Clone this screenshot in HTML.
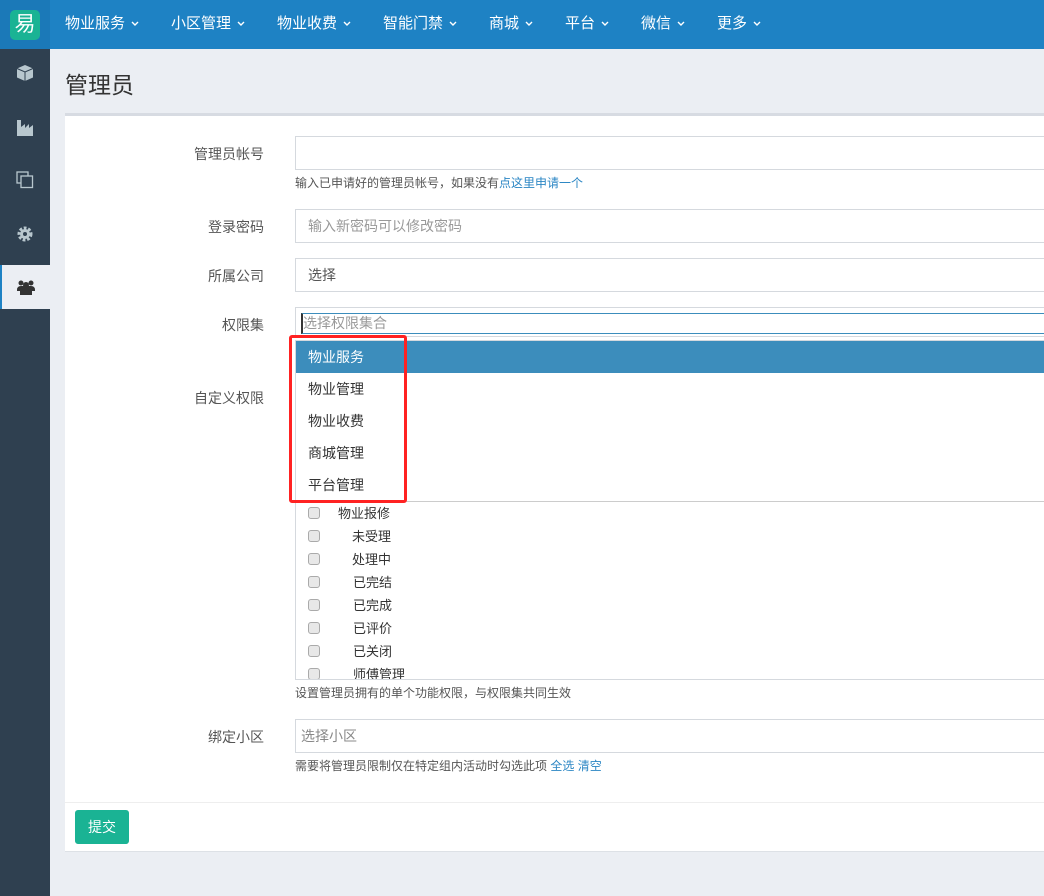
<!DOCTYPE html>
<html><head><meta charset="utf-8"><style>
*{box-sizing:border-box;margin:0;padding:0}
body{width:1044px;height:896px;overflow:hidden;background:#ebeef3;font-family:"Liberation Sans","Noto Sans CJK SC",sans-serif;font-size:14px;color:#333;position:relative}
.top{position:absolute;left:0;top:0;width:1044px;height:49px;background:#1e82c4}
.logo{position:absolute;left:0;top:0;width:50px;height:49px;background:#1b79b8}
.logo div{position:absolute;left:10px;top:10px;width:30px;height:30px;border-radius:5px;background:#1ab394;color:#fff;font-size:21px;line-height:30px;text-align:center}
.nav{position:absolute;top:0;height:49px;line-height:47px;color:#fff;font-size:15px}
.nav svg{margin-left:6px;vertical-align:middle}
.side{position:absolute;left:0;top:49px;width:50px;height:847px;background:#2f4050}
.si{position:absolute;left:0;width:50px;height:44px;display:flex;align-items:center;justify-content:center}
.act{background:#ebeef3;border-left:2px solid #1e82c4}
h1{position:absolute;left:65px;top:66px;font-size:23px;font-weight:normal;color:#333}
.card{position:absolute;left:65px;top:113px;width:990px;height:739px;background:#fff;border-top:3px solid #d7dbe2;border-bottom:1px solid #dde1e6}
.lbl{position:absolute;right:780px;font-size:14px;color:#555;text-align:right}
.inp{position:absolute;left:295px;width:760px;height:34px;border:1px solid #d5d9de;background:#fff;padding-left:12px;line-height:32px;color:#555}
.ph{color:#999}
.help{position:absolute;left:295px;font-size:12px;color:#555}
.help a{color:#2b86c4;text-decoration:none}
.dd{position:absolute;left:296px;top:341px;width:760px;height:161px;background:#fff;border-bottom:1px solid #ccc}
.dd div{height:32px;line-height:32px;padding-left:12px}
.dd .hl{background:#3c8dbc;color:#fff}
.red{position:absolute;left:289px;top:335px;width:118px;height:168px;border:3px solid #f22;border-radius:3px}
.cb{position:absolute;left:308px;width:12px;height:12px;border:1px solid #aaa;border-radius:3px;background:#e8e8e8}
.ct{position:absolute;font-size:13px;color:#333}
.btn{position:absolute;left:75px;top:810px;width:54px;height:34px;background:#1ab394;border-radius:3px;color:#fff;text-align:center;line-height:34px}
</style></head><body>
<div class="top"></div>
<div class="logo"><div>易</div></div>
<div class="nav" style="left:65px">物业服务<svg width="8" height="6"><path d="M1 1l3 3 3-3" stroke="#fff" fill="none" stroke-width="1.4"/></svg></div>
<div class="nav" style="left:171px">小区管理<svg width="8" height="6"><path d="M1 1l3 3 3-3" stroke="#fff" fill="none" stroke-width="1.4"/></svg></div>
<div class="nav" style="left:277px">物业收费<svg width="8" height="6"><path d="M1 1l3 3 3-3" stroke="#fff" fill="none" stroke-width="1.4"/></svg></div>
<div class="nav" style="left:383px">智能门禁<svg width="8" height="6"><path d="M1 1l3 3 3-3" stroke="#fff" fill="none" stroke-width="1.4"/></svg></div>
<div class="nav" style="left:489px">商城<svg width="8" height="6"><path d="M1 1l3 3 3-3" stroke="#fff" fill="none" stroke-width="1.4"/></svg></div>
<div class="nav" style="left:565px">平台<svg width="8" height="6"><path d="M1 1l3 3 3-3" stroke="#fff" fill="none" stroke-width="1.4"/></svg></div>
<div class="nav" style="left:641px">微信<svg width="8" height="6"><path d="M1 1l3 3 3-3" stroke="#fff" fill="none" stroke-width="1.4"/></svg></div>
<div class="nav" style="left:717px">更多<svg width="8" height="6"><path d="M1 1l3 3 3-3" stroke="#fff" fill="none" stroke-width="1.4"/></svg></div>
<div class="side">
<div class="si" style="top:2px"><svg width="18" height="18"><path d="M9 1L17 4.5V13.5L9 17L1 13.5V4.5Z" fill="#b8c7ce"/><path d="M1 4.5L9 8L17 4.5M9 8V17" stroke="#2f4050" fill="none"/></svg></div>
<div class="si" style="top:56px"><svg width="18" height="17"><path d="M1 1H5V8L9 5V9L13 5V9L17 6V17H1Z" fill="#b8c7ce"/></svg></div>
<div class="si" style="top:109px"><svg width="18" height="18"><rect x="1" y="1" width="11" height="11" fill="none" stroke="#b8c7ce" stroke-width="1.3"/><rect x="5" y="5" width="11.5" height="11.5" fill="#2f4050" stroke="#b8c7ce" stroke-width="1.3"/></svg></div>
<div class="si" style="top:163px"><svg width="16" height="16"><circle cx="8" cy="8" r="5.5" fill="none" stroke="#b8c7ce" stroke-width="4" stroke-dasharray="2.5 1.6"/><circle cx="8" cy="8" r="5" fill="#b8c7ce"/><circle cx="8" cy="8" r="2" fill="#2f4050"/></svg></div>
<div class="si act" style="top:216px"><svg width="18" height="15"><circle cx="4" cy="3" r="2.5" fill="#333"/><circle cx="14" cy="3" r="2.5" fill="#333"/><circle cx="9" cy="5" r="3" fill="#333"/><path d="M0 10Q0 6 4 6H14Q18 6 18 10V11H0Z M3 15V10Q3 8 9 8Q15 8 15 10V15Z" fill="#333"/></svg></div>
</div>
<h1>管理员</h1>
<div class="card"></div>
<div class="lbl" style="top:144px">管理员帐号</div>
<div class="inp" style="top:136px"></div>
<div class="help" style="top:174px">输入已申请好的管理员帐号，如果没有<a>点这里申请一个</a></div>
<div class="lbl" style="top:217px">登录密码</div>
<div class="inp ph" style="top:209px">输入新密码可以修改密码</div>
<div class="lbl" style="top:266px">所属公司</div>
<div class="inp" style="top:258px">选择</div>
<div class="lbl" style="top:315px">权限集</div>
<div class="inp" style="top:307px;height:30px"></div>
<div style="position:absolute;left:301px;top:313px;width:750px;height:21px;border:1px solid #3c8dbc;border-left:2px solid #333;line-height:19px;color:#999">选择权限集合</div>
<div class="lbl" style="top:388px">自定义权限</div>
<div style="position:absolute;left:295px;top:340px;width:760px;height:340px;border:1px solid #d5d9de"></div>
<div class="cb" style="top:507px"></div><div class="ct" style="left:338px;top:503px">物业报修</div>
<div class="cb" style="top:530px"></div><div class="ct" style="left:352px;top:526px">未受理</div>
<div class="cb" style="top:553px"></div><div class="ct" style="left:352px;top:549px">处理中</div>
<div class="cb" style="top:576px"></div><div class="ct" style="left:353px;top:572px">已完结</div>
<div class="cb" style="top:599px"></div><div class="ct" style="left:353px;top:595px">已完成</div>
<div class="cb" style="top:622px"></div><div class="ct" style="left:353px;top:618px">已评价</div>
<div class="cb" style="top:645px"></div><div class="ct" style="left:353px;top:641px">已关闭</div>
<div style="position:absolute;left:296px;top:664px;width:700px;height:15px;overflow:hidden"><div class="cb" style="left:12px;top:4px"></div><div class="ct" style="left:57px;top:0px">师傅管理</div></div>
<div class="help" style="top:684px">设置管理员拥有的单个功能权限，与权限集共同生效</div>
<div class="dd"><div class="hl">物业服务</div><div>物业管理</div><div>物业收费</div><div>商城管理</div><div>平台管理</div></div>
<div class="red"></div>
<div class="lbl" style="top:727px">绑定小区</div>
<div class="inp ph" style="top:719px;padding-left:5px;color:#888">选择小区</div>
<div class="help" style="top:757px">需要将管理员限制仅在特定组内活动时勾选此项 <a>全选</a> <a>清空</a></div>
<div style="position:absolute;left:65px;top:802px;width:990px;border-top:1px solid #eee"></div>
<div class="btn">提交</div>
</body></html>
